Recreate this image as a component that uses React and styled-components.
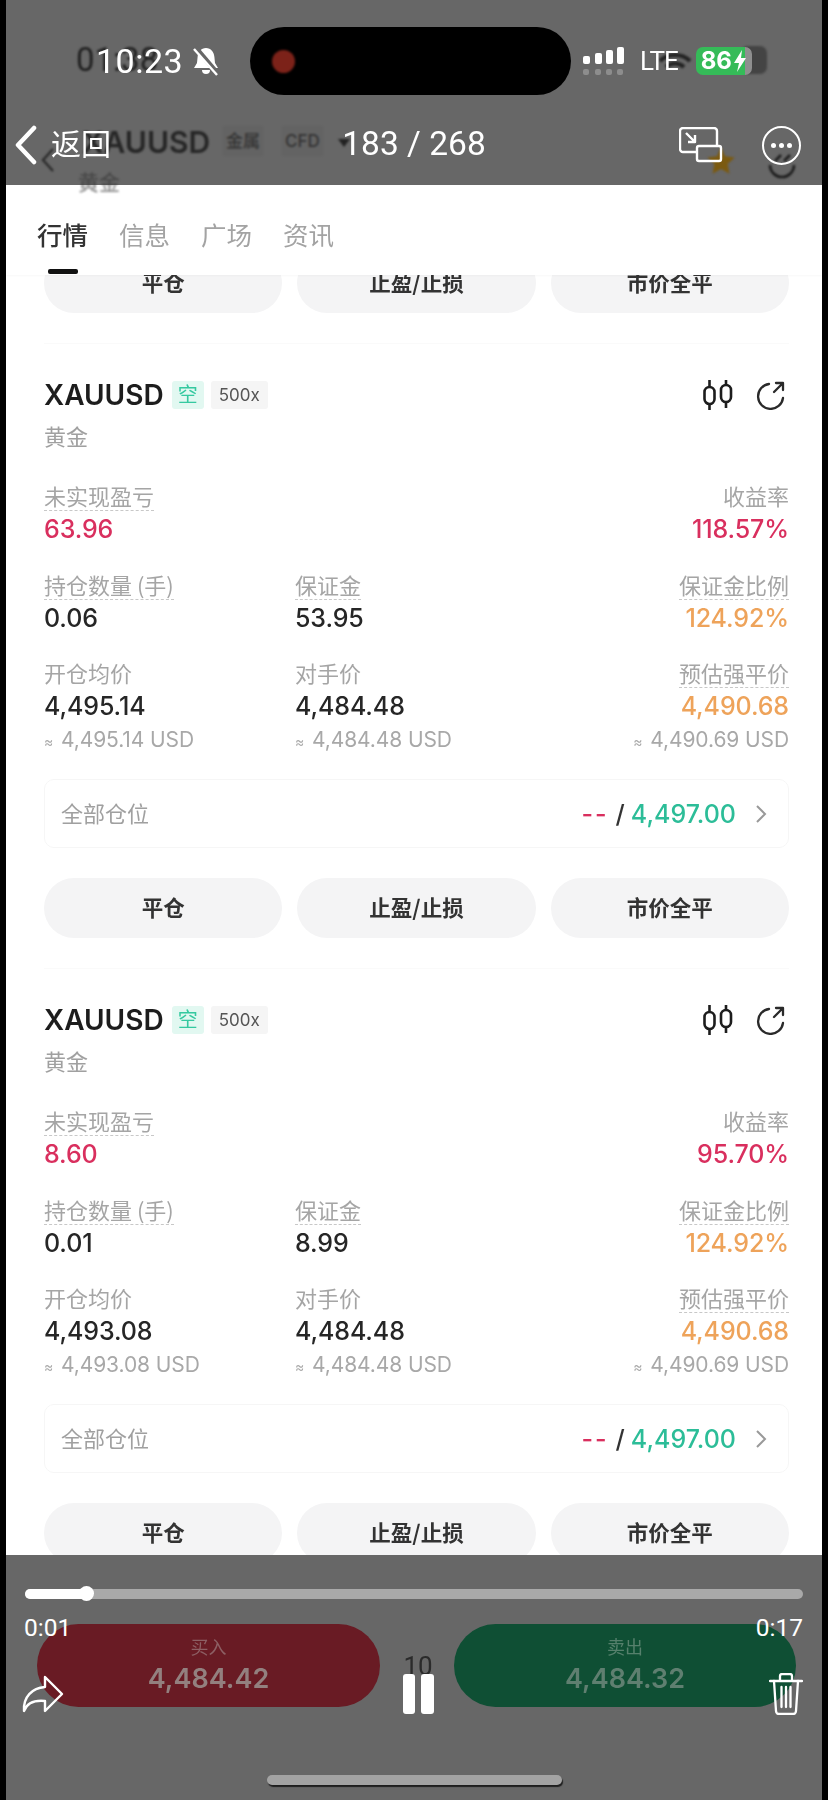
import React from "react";
import styled, { createGlobalStyle } from "styled-components";

const GlobalStyle = createGlobalStyle`
  html, body { margin: 0; padding: 0; background: #000; }
  * { box-sizing: border-box; }
  body { font-family: Inter, "Noto Sans CJK SC", sans-serif; }
`;

const RED = "#d92f5e";
const ORANGE = "#eea35a";
const GREEN = "#2cbd98";
const INK = "#262626";

const positions = [
  { pnl: "63.96", rate: "118.57%", qty: "0.06", margin: "53.95", open: "4,495.14" },
  { pnl: "8.60", rate: "95.70%", qty: "0.01", margin: "8.99", open: "4,493.08" },
];

const ActionButtons = () => (
  <Actions>
    <Action>平仓</Action>
    <Action>止盈/止损</Action>
    <Action>市价全平</Action>
  </Actions>
);

const Stat = ({ label, value, tone, sub, right, dashed }) => (
  <Cell $right={right}>
    <Label $dashed={dashed}>{label}</Label>
    <Value $tone={tone}>{value}</Value>
    {sub && (
      <Sub>
        <i>≈</i> {sub} USD
      </Sub>
    )}
  </Cell>
);

const PositionCard = ({ item }) => (
  <Card>
    <CardHead>
      <Symbol>XAUUSD</Symbol>
      <Tag $kind="short">空</Tag>
      <Tag>500x</Tag>
      <HeadIcons>
        <svg width="30" height="30" viewBox="0 0 30 30" fill="none" stroke="#1d1d1d" strokeWidth="2.6">
          <path d="M6.500 0v7M6.500 24v6M23 0v5M23 22v6" />
          <rect x="1.500" y="7" width="10" height="17" rx="5" />
          <rect x="18" y="5" width="10" height="17" rx="5" />
        </svg>
        <svg width="30" height="30" viewBox="0 0 30 30" fill="none" stroke="#2a2a2a" strokeWidth="2.300" strokeLinecap="round" strokeLinejoin="round">
          <path d="M13 4A12.500 12.500 0 1 0 27 18" />
          <path d="M18 12L27 3M20 3h7v7" />
        </svg>
      </HeadIcons>
    </CardHead>
    <CardSub>黄金</CardSub>
    <StatGrid>
      <Stat label="未实现盈亏" value={item.pnl} tone={RED} dashed />
      <span />
      <Stat label="收益率" value={item.rate} tone={RED} right />
      <Stat label="持仓数量 (手)" value={item.qty} dashed />
      <Stat label="保证金" value={item.margin} dashed />
      <Stat label="保证金比例" value="124.92%" tone={ORANGE} right dashed />
      <Stat label="开仓均价" value={item.open} sub={item.open} />
      <Stat label="对手价" value="4,484.48" sub="4,484.48" />
      <Stat label="预估强平价" value="4,490.68" tone={ORANGE} sub="4,490.69" right dashed />
    </StatGrid>
    <AllBox>
      <AllLabel>全部仓位</AllLabel>
      <AllPrices>
        <Dashes>--</Dashes>
        <Slash>/</Slash>
        <TakeProfit>4,497.00</TakeProfit>
        <svg width="12" height="20" viewBox="0 0 12 20" fill="none" stroke="#999" strokeWidth="2">
          <path d="M2 2l8 8-8 8" />
        </svg>
      </AllPrices>
    </AllBox>
    <ActionButtons />
  </Card>
);

const App = () => (
  <>
    <GlobalStyle />
    <Screen>
      <TopBar>
        <GhostHeader>
          <GhostTime>01:38</GhostTime>
          <GhostWifi width="34" height="24" viewBox="0 0 34 24" fill="none" stroke="#222" strokeWidth="4">
            <path d="M2 11a22 22 0 0 1 30 0M8 17a13 13 0 0 1 18 0" />
          </GhostWifi>
          <GhostBattery />
          <GhostBack width="14" height="26" viewBox="0 0 14 26" fill="none" stroke="#2a2a2a" strokeWidth="2.4">
            <path d="M12 2L2 13l10 11" />
          </GhostBack>
          <GhostSymbol>XAUUSD</GhostSymbol>
          <GhostTag $left={217}>金属</GhostTag>
          <GhostTag $left={276}>CFD</GhostTag>
          <GhostCaret />
          <GhostName>黄金</GhostName>
          <GhostStar width="32" height="30" viewBox="0 0 24 24" fill="#7b5a10">
            <path d="M12 1l3.3 7.2 7.7.9-5.7 5.3 1.5 7.8L12 18.3 5.2 22.200l1.500-7.800L1 9.100l7.700-.9z" />
          </GhostStar>
          <GhostRefresh width="30" height="30" viewBox="0 0 30 30" fill="none" stroke="#1c1c1c" strokeWidth="2.600">
            <path d="M3 16a12 12 0 0 0 24 0M8 12l6-6M17 12l6-6" />
          </GhostRefresh>
        </GhostHeader>

        <StatusRow>
          <Clock>10:23</Clock>
          <svg width="28" height="30" viewBox="0 0 28 30" fill="#fff" stroke="none">
            <path d="M14 2c5 0 8 4 8.400 9l.6 6 3 5H2l3-5 .6-6C6 6 9 2 14 2z" />
            <path d="M10 24h8a4 4 0 0 1-8 0z" />
            <path d="M3 1l23 27" stroke="#676767" strokeWidth="5" />
            <path d="M2 3l23 26" stroke="#fff" strokeWidth="2.400" />
          </svg>
          <Island>
            <RecDot />
          </Island>
          <svg width="44" height="30" viewBox="0 0 44 30" fill="#fff">
            <rect x="0" y="10" width="7" height="8" rx="2" />
            <rect x="12" y="7" width="7" height="11" rx="2" />
            <rect x="23" y="4" width="7" height="14" rx="2" />
            <rect x="34" y="1" width="7" height="17" rx="2" />
            <g opacity="0.25">
              <rect x="0" y="23" width="6" height="6" rx="2" />
              <rect x="12" y="23" width="6" height="6" rx="2" />
              <rect x="23" y="23" width="6" height="6" rx="2" />
              <rect x="34" y="23" width="6" height="6" rx="2" />
            </g>
          </svg>
          <Lte>LTE</Lte>
          <Battery>
            86
            <svg width="14" height="22" viewBox="0 0 14 22" fill="#fff">
              <path d="M9 0L1 13h5l-2 9 9-14H8z" />
            </svg>
          </Battery>
        </StatusRow>

        <NavRow>
          <BackLink>
            <svg width="24" height="40" viewBox="0 0 24 40" fill="none" stroke="#fff" strokeWidth="4.500" strokeLinecap="round" strokeLinejoin="round">
              <path d="M20 3L4 20l16 17" />
            </svg>
            <span>返回</span>
          </BackLink>
          <Counter>183 / 268</Counter>
          <NavIcons>
            <svg width="44" height="36" viewBox="0 0 44 36" fill="none" stroke="#fff" strokeWidth="2.400" strokeLinejoin="round">
              <path d="M18 25H4a3 3 0 0 1-3-3V4a3 3 0 0 1 3-3h31a3 3 0 0 1 3 3v15" />
              <rect x="18" y="19" width="24" height="15" rx="2" />
              <path d="M7 6l9 9M16 8v7H9" />
            </svg>
            <MoreButton>
              <i /><i /><i />
            </MoreButton>
          </NavIcons>
        </NavRow>
      </TopBar>

      <Sheet>
        <TabBar>
          <Tab $active>行情</Tab>
          <Tab>信息</Tab>
          <Tab>广场</Tab>
          <Tab>资讯</Tab>
        </TabBar>
        <Scroller>
          <ClippedRow>
            <ActionButtons />
          </ClippedRow>
          {positions.map((item) => (
            <PositionCard key={item.open} item={item} />
          ))}
        </Scroller>
      </Sheet>

      <BottomBar>
        <OrderRow>
          <OrderButton $bg="#691b24" $ink="#8d5f64" $price="#93807f">
            <small>买入</small>
            <b>4,484.42</b>
          </OrderButton>
          <Leverage>10</Leverage>
          <OrderButton $bg="#0f4f34" $ink="#56806c" $price="#5f7f70">
            <small>卖出</small>
            <b>4,484.32</b>
          </OrderButton>
        </OrderRow>

        <Player>
          <Track>
            <TrackFill style={{ width: "8%" }} />
          </Track>
          <Times>
            <span>0:01</span>
            <span>0:17</span>
          </Times>
          <PlayerControls>
            <svg width="42" height="38" viewBox="0 0 42 38" fill="none" stroke="#fff" strokeWidth="2.400" strokeLinejoin="round">
              <path d="M23 2l17 17-17 17V26C13 25 5 28 2 36 1 22 10 13 23 12z" />
            </svg>
            <PauseIcon>
              <i /><i />
            </PauseIcon>
            <svg width="34" height="42" viewBox="0 0 34 42" fill="none" stroke="#fff" strokeWidth="2.300" strokeLinecap="round">
              <path d="M1 8h32M11 8V3a2 2 0 0 1 2-2h8a2 2 0 0 1 2 2v5" />
              <path d="M5 8l2 30a3 3 0 0 0 3 3h14a3 3 0 0 0 3-3l2-30" />
              <path d="M12.500 14v20M17 14v20M21.500 14v20" />
            </svg>
          </PlayerControls>
        </Player>

        <HomeBar />
      </BottomBar>
    </Screen>
  </>
);

export default App;

const Screen = styled.div`
  width: 828px;
  height: 1800px;
  padding: 0 6px;
  background: #000;
  display: flex;
  flex-direction: column;
  overflow: hidden;
`;

const TopBar = styled.header`
  position: relative;
  z-index: 2;
  height: 185px;
  flex: none;
  background: #676767;
  padding-top: 27px;
`;

const GhostHeader = styled.div`
  position: absolute;
  inset: 0;
  filter: blur(0.8px);
  color: #2a2a2a;
`;

const GhostTime = styled.span`
  position: absolute;
  left: 70px;
  top: 40px;
  font: 400 33px/40px Roboto, sans-serif;
  color: #1f1f1f;
`;

const GhostWifi = styled.svg`
  position: absolute;
  left: 652px;
  top: 50px;
`;

const GhostBattery = styled.div`
  position: absolute;
  left: 735px;
  top: 46px;
  width: 26px;
  height: 28px;
  border-radius: 7px;
  background: #444;
`;

const GhostBack = styled.svg`
  position: absolute;
  left: 35px;
  top: 147px;
`;

const GhostSymbol = styled.span`
  position: absolute;
  left: 76px;
  top: 122px;
  font: 600 30px/40px Inter, sans-serif;
  color: #262626;
`;

const GhostTag = styled.span`
  position: absolute;
  left: ${(p) => p.$left}px;
  top: 126px;
  padding: 0 3px;
  font: 500 17px/30px Inter, "Noto Sans CJK SC", sans-serif;
  color: #333;
  background: #636363;
`;

const GhostCaret = styled.i`
  position: absolute;
  left: 332px;
  top: 139px;
  border: 6px solid transparent;
  border-top: 8px solid #222;
`;

const GhostName = styled.span`
  position: absolute;
  left: 72px;
  top: 168px;
  font: 500 21px/26px "Noto Sans CJK SC", sans-serif;
  color: rgba(50, 50, 50, 0.55);
`;

const GhostStar = styled.svg`
  position: absolute;
  left: 699px;
  top: 146px;
`;

const GhostRefresh = styled.svg`
  position: absolute;
  left: 761px;
  top: 149px;
`;

const StatusRow = styled.div`
  position: relative;
  height: 68px;
  display: flex;
  align-items: center;
  padding-left: 90px;
`;

const Clock = styled.span`
  width: 96px;
  font: 400 34px/40px Roboto, sans-serif;
  letter-spacing: 0.5px;
  color: #fff;
`;

const Island = styled.div`
  width: 321px;
  height: 68px;
  margin: 0 12px 0 30px;
  padding-left: 22px;
  display: flex;
  align-items: center;
  background: #000;
  border-radius: 34px;
`;

const RecDot = styled.span`
  width: 23px;
  height: 23px;
  border-radius: 50%;
  background: #7c2219;
  filter: blur(1px);
`;

const Lte = styled.span`
  margin-left: 13px;
  font: 400 26px/30px Roboto, sans-serif;
  letter-spacing: -1px;
  color: #fff;
`;

const Battery = styled.span`
  position: relative;
  margin-left: 18px;
  width: 56px;
  height: 28px;
  display: flex;
  align-items: center;
  justify-content: center;
  gap: 1px;
  border-radius: 7px;
  background: linear-gradient(90deg, #35bb58 88%, #8f8f8f 88%);
  font: 700 24px/28px Inter, sans-serif;
  color: #fff;
`;

const NavRow = styled.nav`
  position: relative;
  height: 44px;
  margin-top: 27px;
  display: grid;
  grid-template-columns: 1fr auto 1fr;
  align-items: center;
`;

const BackLink = styled.span`
  display: flex;
  align-items: center;
  gap: 13px;
  padding-left: 8px;
  color: #fff;

  span {
    padding-bottom: 6px;
    font: 400 30px/40px "Noto Sans CJK SC", sans-serif;
  }
`;

const Counter = styled.span`
  padding-bottom: 2px;
  font: 400 33.500px/40px Roboto, sans-serif;
  color: #fff;
`;

const NavIcons = styled.div`
  display: flex;
  align-items: center;
  justify-content: flex-end;
  gap: 39px;
  padding-right: 21px;
`;

const MoreButton = styled.span`
  width: 39px;
  height: 39px;
  display: flex;
  align-items: center;
  justify-content: center;
  gap: 3px;
  border: 2.500px solid #fff;
  border-radius: 50%;

  i {
    width: 5px;
    height: 5px;
    border-radius: 50%;
    background: #fff;
  }
`;

const Sheet = styled.main`
  height: 1370px;
  flex: none;
  background: #fff;
  display: flex;
  flex-direction: column;
  color: ${INK};
`;

const TabBar = styled.div`
  position: relative;
  z-index: 1;
  height: 90px;
  flex: none;
  display: flex;
  gap: 31px;
  padding: 34px 0 0 31px;
  background: #fff;
  box-shadow: 0 1px 2px rgba(0, 0, 0, 0.03);
`;

const Tab = styled.span`
  position: relative;
  width: 51px;
  font: ${(p) => (p.$active ? 500 : 400)} 25.500px/30px "Noto Sans CJK SC", sans-serif;
  color: ${(p) => (p.$active ? "#333" : "#a3a3a3")};
  filter: blur(0.4px);

  &::after {
    content: "";
    display: ${(p) => (p.$active ? "block" : "none")};
    position: absolute;
    left: 11px;
    top: 50px;
    width: 30px;
    height: 5px;
    border-radius: 2px;
    background: #111;
  }
`;

const Scroller = styled.div`
  flex: 1;
  min-height: 0;
  overflow: hidden;
  padding: 0 33px 0 38px;
  filter: blur(0.4px);
`;

const ClippedRow = styled.div`
  margin-top: -22px;
  padding-bottom: 30px;
`;

const Card = styled.section`
  border-top: 1px solid #fafafa;
  padding: 36px 0 30px;
`;

const CardHead = styled.div`
  height: 30px;
  display: flex;
  align-items: center;
  gap: 7px;
`;

const Symbol = styled.span`
  margin-right: 1px;
  font: 600 28px/30px Inter, sans-serif;
  color: #1d1d1d;
`;

const Tag = styled.span`
  height: 28px;
  padding: 0 ${(p) => (p.$kind === "short" ? 6 : 8)}px;
  border-radius: 3px;
  font: 400 ${(p) => (p.$kind === "short" ? 20 : 17)}px/28px Inter, "Noto Sans CJK SC", sans-serif;
  color: ${(p) => (p.$kind === "short" ? "#35c9a0" : "#555")};
  background: ${(p) => (p.$kind === "short" ? "#e2f8f1" : "#f5f5f5")};
`;

const HeadIcons = styled.div`
  margin-left: auto;
  display: flex;
  gap: 23px;
  padding-right: 3px;
`;

const CardSub = styled.div`
  margin-top: 14px;
  font: 400 22px/22px "Noto Sans CJK SC", sans-serif;
  color: #a0a0a0;
`;

const StatGrid = styled.div`
  margin-top: 36px;
  display: grid;
  grid-template-columns: 251px 1fr 1fr;
  row-gap: 27.500px;
`;

const Cell = styled.div`
  display: flex;
  flex-direction: column;
  align-items: ${(p) => (p.$right ? "flex-end" : "flex-start")};
`;

const Label = styled.span`
  height: 29px;
  font: 400 22px/26px "Noto Sans CJK SC", sans-serif;
  color: #a5a5a5;
  border-bottom: 1px dashed ${(p) => (p.$dashed ? "#c8c8c8" : "transparent")};
`;

const Value = styled.span`
  margin-top: 4px;
  font: 500 25px/28px Inter, sans-serif;
  letter-spacing: -0.1px;
  color: ${(p) => p.$tone || INK};
`;

const Sub = styled.span`
  margin-top: 6px;
  font: 400 21px/28px Inter, sans-serif;
  letter-spacing: -0.1px;
  color: #a8a8a8;

  i {
    font-style: normal;
    font-size: 14px;
    line-height: 1;
    margin-right: 2px;
  }
`;

const AllBox = styled.div`
  height: 69px;
  margin-top: 25px;
  padding: 0 21px 0 16px;
  display: flex;
  align-items: center;
  justify-content: space-between;
  border: 1px solid #f6f6f6;
  border-radius: 10px;
`;

const AllLabel = styled.span`
  padding-bottom: 4px;
  font: 400 22px/28px "Noto Sans CJK SC", sans-serif;
  color: #a0a0a0;
`;

const AllPrices = styled.div`
  display: flex;
  align-items: center;
  font: 500 25px/28px Inter, sans-serif;

  svg {
    margin-left: 19px;
  }
`;

const Dashes = styled.span`
  color: ${RED};
  letter-spacing: 2px;
`;

const Slash = styled.span`
  margin: 0 6px 0 7px;
  color: #333;
`;

const TakeProfit = styled.span`
  color: ${GREEN};
`;

const Actions = styled.div`
  margin-top: 30px;
  display: grid;
  grid-template-columns: repeat(3, 1fr);
  gap: 15px;

  ${ClippedRow} & {
    margin-top: 0;
  }
`;

const Action = styled.button`
  height: 60px;
  padding: 0 0 3px;
  border: 0;
  border-radius: 30px;
  background: #f4f4f5;
  font: 700 21.500px/57px "Noto Sans CJK SC", sans-serif;
  color: #333;
`;

const BottomBar = styled.footer`
  position: relative;
  flex: 1;
  background: #676767;
`;

const OrderRow = styled.div`
  padding: 69px 26px 0 31px;
  display: grid;
  grid-template-columns: 343px 1fr 342px;
  align-items: center;
`;

const OrderButton = styled.div`
  height: 83px;
  border-radius: 42px;
  background: ${(p) => p.$bg};
  display: flex;
  flex-direction: column;
  align-items: center;
  filter: blur(0.5px);

  small {
    margin-top: 10px;
    font: 400 18px/24px "Noto Sans CJK SC", sans-serif;
    color: ${(p) => p.$ink};
  }

  b {
    margin-top: 4px;
    font: 600 27px/34px Inter, sans-serif;
    color: ${(p) => p.$price};
  }
`;

const Leverage = styled.span`
  padding-left: 2px;
  text-align: center;
  font: 400 26px/32px Roboto, sans-serif;
  color: #2b2b2b;
  filter: blur(0.5px);
`;

const Player = styled.div`
  position: absolute;
  inset: 34px 19px auto 19px;
`;

const Track = styled.div`
  height: 10px;
  border-radius: 5px;
  background: #a9a9a9;
`;

const TrackFill = styled.div`
  position: relative;
  height: 10px;
  border-radius: 5px;
  background: #fff;

  &::after {
    content: "";
    position: absolute;
    right: -7px;
    top: -3px;
    width: 15px;
    height: 15px;
    border-radius: 50%;
    background: #fff;
  }
`;

const Times = styled.div`
  margin: 15px 0 0 -1px;
  display: flex;
  justify-content: space-between;
  font: 400 24.500px/28px Roboto, sans-serif;
  color: #fff;
`;

const PlayerControls = styled.div`
  margin: 31px 0 0 -3px;
  display: flex;
  align-items: center;
  justify-content: space-between;
`;

const PauseIcon = styled.div`
  display: flex;
  gap: 6px;
  margin-left: 3px;

  i {
    width: 12.500px;
    height: 40px;
    border-radius: 3px;
    background: #fff;
  }
`;

const HomeBar = styled.div`
  position: absolute;
  left: 261px;
  bottom: 15px;
  width: 295px;
  height: 10px;
  border-radius: 5px;
  background: #a3a3a3;
  box-shadow: 1px 2px 1px rgba(0, 0, 0, 0.7);
`;
